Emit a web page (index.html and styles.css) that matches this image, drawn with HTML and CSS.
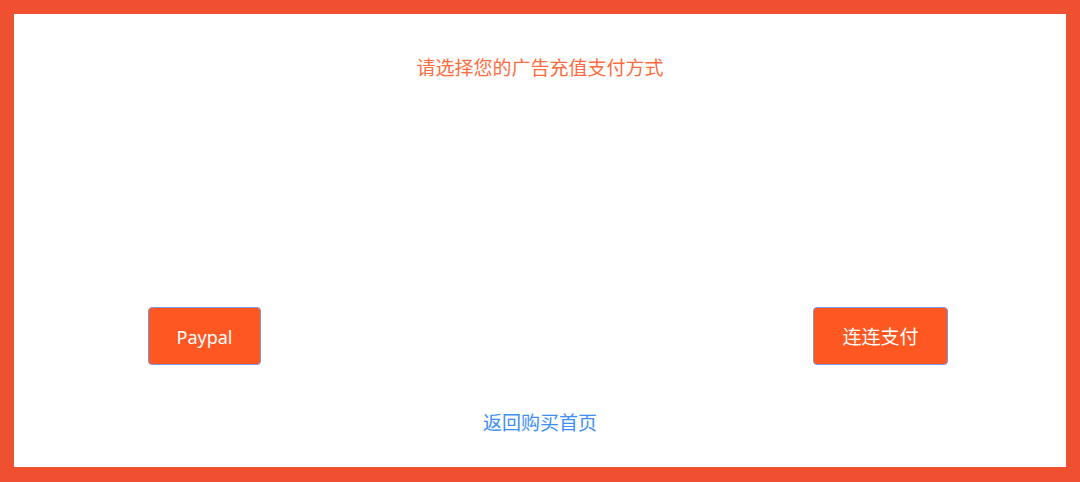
FILE: index.html
```html
<!DOCTYPE html>
<html lang="zh-CN">
<head>
<meta charset="utf-8">
<title>支付方式</title>
<link rel="stylesheet" href="styles.css">
</head>
<body>
<div class="frame">
  <h1 class="title">请选择您的广告充值支付方式</h1>
  <div class="buttons">
    <button class="pay-btn pay-paypal">Paypal</button>
    <button class="pay-btn pay-lianlian">连连支付</button>
  </div>
  <a class="back" href="#">返回购买首页</a>
</div>
</body>
</html>
```
FILE: styles.css
```css
html, body {
  margin: 0;
  padding: 0;
}
body {
  width: 1080px;
  height: 482px;
  background: #ef502f;
  box-sizing: border-box;
  padding: 14px 14px 15px 14px;
  font-family: "Noto Sans", "Noto Sans CJK SC", sans-serif;
}
.frame {
  background: #ffffff;
  height: 100%;
  display: flex;
  flex-direction: column;
  align-items: stretch;
}
.title {
  margin: 42px 0 0 0;
  font-size: 19px;
  font-weight: 400;
  line-height: 24px;
  color: #ff6b3d;
  text-align: center;
}
.buttons {
  display: flex;
  justify-content: space-between;
  padding: 0 118px 0 134px;
  margin-top: 227px;
}
.pay-btn {
  height: 58px;
  padding: 2px 0 0 0;
  background: #ff5722;
  color: #ffffff;
  border: 1px solid #7d98d8;
  border-radius: 4px;
  font-family: "Noto Sans", "Noto Sans CJK SC", sans-serif;
  font-size: 19px;
  line-height: 24px;
}
.pay-paypal {
  width: 113px;
  font-size: 18px;
}
.pay-lianlian {
  width: 135px;
}
.back {
  align-self: center;
  margin-top: 46px;
  font-size: 19px;
  line-height: 24px;
  color: #3d8ef7;
  text-decoration: none;
}
```
